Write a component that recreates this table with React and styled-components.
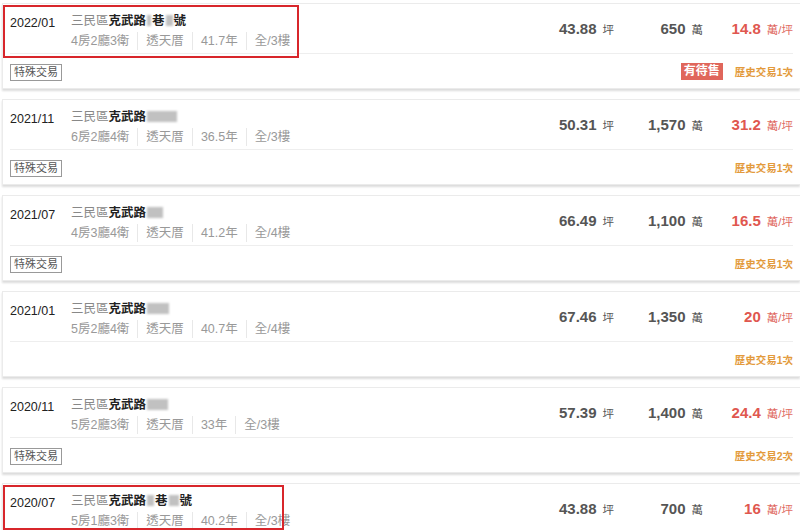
import React from "react";
import styled, { createGlobalStyle } from "styled-components";

const Global = createGlobalStyle`
  html, body { margin: 0; padding: 0; background: #ffffff; }
  body { font-family: "Liberation Sans", "Noto Sans CJK TC", sans-serif; }
  * { box-sizing: border-box; }
`;

const List = styled.div`
  display: flex;
  flex-direction: column;
  gap: 10px;
  padding: 3px 0 20px 2px;
`;

const Card = styled.div`
  position: relative;
  height: 86px;
  background: #fff;
  border: 1px solid #ebebeb;
  border-right: none;
  box-shadow: 0 2px 2px rgba(0, 0, 0, 0.14);
  padding: 0 7px 0 7px;
  display: flex;
  flex-direction: column;
`;

const Top = styled.div`
  height: 50px;
  display: flex;
  align-items: flex-start;
  border-bottom: 1px solid #eeeeee;
`;

const DateCell = styled.div`
  width: 61px;
  flex: none;
  padding-top: 10px;
  font-size: 12.5px;
  line-height: 18px;
  color: #222;
`;

const Info = styled.div`
  flex: 1;
  padding-top: 8px;
  display: flex;
  flex-direction: column;
  gap: 2px;
`;

const Address = styled.div`
  font-size: 12.5px;
  line-height: 18px;
  color: #888;
  white-space: nowrap;
`;

const Street = styled.span`
  color: #222;
  font-weight: bold;
`;

const Blur = styled.span`
  display: inline-block;
  width: ${(p) => p.$w}px;
  height: 11px;
  margin: 0 1px;
  vertical-align: -1px;
  background: #a0a0a0;
  opacity: 0.65;
  filter: blur(1.3px);
`;

const Specs = styled.div`
  display: flex;
  align-items: center;
  font-size: 12.5px;
  line-height: 18px;
  color: #999;
  white-space: nowrap;
`;

const Spec = styled.span`
  padding: 0 8px;
  border-left: 1px solid #e8e8e8;
  &:first-child {
    padding-left: 0;
    border-left: none;
  }
`;

const Num = styled.div`
  align-self: center;
  width: ${(p) => p.$w}px;
  flex: none;
  text-align: right;
  white-space: nowrap;
  font-size: 15px;
  font-weight: bold;
  color: ${(p) => (p.$red ? "#e0574f" : "#555")};
`;

const Unit = styled.span`
  margin-left: 6px;
  font-size: 11.5px;
  font-weight: normal;
  color: ${(p) => (p.$red ? "#e06a62" : "#555")};
`;

const Bottom = styled.div`
  flex: 1;
  display: flex;
  align-items: center;
  justify-content: space-between;
`;

const Tag = styled.span`
  display: inline-block;
  height: 17px;
  padding: 0 3px;
  border: 1px solid #999;
  font-size: 11px;
  line-height: 15px;
  color: #555;
`;

const Right = styled.div`
  display: flex;
  align-items: center;
  gap: 12px;
`;

const Pending = styled.span`
  display: inline-block;
  height: 17px;
  padding: 0 3px;
  background: #e0665b;
  color: #fff;
  font-size: 12px;
  line-height: 17px;
  font-weight: bold;
`;

const History = styled.span`
  font-size: 10.5px;
  font-weight: bold;
  color: #e39a3b;
`;

const Highlight = styled.div`
  position: absolute;
  left: 0;
  top: 1px;
  width: ${(p) => p.$w}px;
  height: ${(p) => p.$h}px;
  border: 2px solid #d8262b;
  pointer-events: none;
`;

const rows = [
  {
    date: "2022/01",
    street: ["克武路", { b: 4 }, "巷", { b: 7 }, "號"],
    spec: ["4房2廳3衛", "透天厝", "41.7年", "全/3樓"],
    area: "43.88",
    total: "650",
    unit: "14.8",
    special: true,
    pending: true,
    history: 1,
    hl: [296, 53],
  },
  {
    date: "2021/11",
    street: ["克武路", { b: 30 }],
    spec: ["6房2廳4衛", "透天厝", "36.5年", "全/3樓"],
    area: "50.31",
    total: "1,570",
    unit: "31.2",
    special: true,
    history: 1,
  },
  {
    date: "2021/07",
    street: ["克武路", { b: 16 }],
    spec: ["4房3廳4衛", "透天厝", "41.2年", "全/4樓"],
    area: "66.49",
    total: "1,100",
    unit: "16.5",
    special: true,
    history: 1,
  },
  {
    date: "2021/01",
    street: ["克武路", { b: 22 }],
    spec: ["5房2廳4衛", "透天厝", "40.7年", "全/4樓"],
    area: "67.46",
    total: "1,350",
    unit: "20",
    special: false,
    history: 1,
  },
  {
    date: "2020/11",
    street: ["克武路", { b: 21 }],
    spec: ["5房2廳3衛", "透天厝", "33年", "全/3樓"],
    area: "57.39",
    total: "1,400",
    unit: "24.4",
    special: true,
    history: 2,
  },
  {
    date: "2020/07",
    street: ["克武路", { b: 7 }, "巷", { b: 10 }, "號"],
    spec: ["5房1廳3衛", "透天厝", "40.2年", "全/3樓"],
    area: "43.88",
    total: "700",
    unit: "16",
    special: false,
    history: 1,
    hl: [281, 45],
  },
];

function Row({ r }) {
  return (
    <Card>
      <Top>
        <DateCell>{r.date}</DateCell>
        <Info>
          <Address>
            三民區
            <Street>
              {r.street.map((s, i) =>
                typeof s === "string" ? <span key={i}>{s}</span> : <Blur key={i} $w={s.b} />
              )}
            </Street>
          </Address>
          <Specs>
            {r.spec.map((s) => (
              <Spec key={s}>{s}</Spec>
            ))}
          </Specs>
        </Info>
        <Num $w={120}>
          {r.area}
          <Unit>坪</Unit>
        </Num>
        <Num $w={89}>
          {r.total}
          <Unit>萬</Unit>
        </Num>
        <Num $w={90} $red>
          {r.unit}
          <Unit $red>萬/坪</Unit>
        </Num>
      </Top>
      <Bottom>
        <div>{r.special && <Tag>特殊交易</Tag>}</div>
        <Right>
          {r.pending && <Pending>有待售</Pending>}
          <History>歷史交易{r.history}次</History>
        </Right>
      </Bottom>
      {r.hl && <Highlight $w={r.hl[0]} $h={r.hl[1]} />}
    </Card>
  );
}

export default function App() {
  return (
    <>
      <Global />
      <List>
        {rows.map((r) => (
          <Row key={r.date} r={r} />
        ))}
      </List>
    </>
  );
}
